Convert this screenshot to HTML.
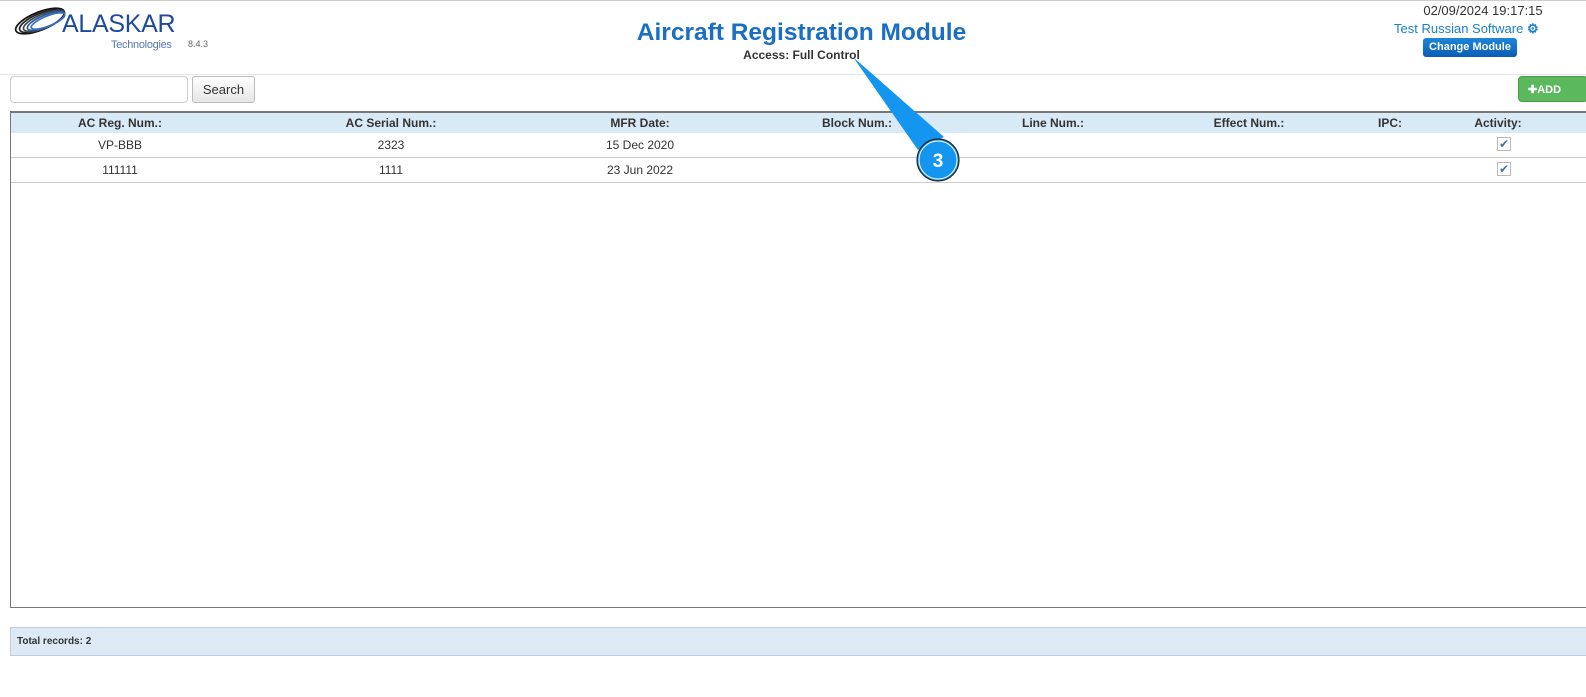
<!DOCTYPE html>
<html><head><style>
body{margin:0;width:1586px;height:697px;overflow:hidden;background:#fff;font-family:"Liberation Sans",Arial,sans-serif;position:relative}
.a{position:absolute}
.th,.td{position:absolute;transform:translateX(-50%);white-space:nowrap;font-size:12px;color:#333}
.th{font-weight:bold;top:116px}
</style></head><body>
<div class="a" style="left:0;top:0;width:1586px;height:1px;background:#ccc"></div>
<svg class="a" style="left:12px;top:4px" width="60" height="34" viewBox="0 0 60 34">
<g fill="none" stroke-width="1.7">
<ellipse cx="28" cy="17" rx="26" ry="9" transform="rotate(-22 28 17)" stroke="#111"/>
<ellipse cx="30" cy="17" rx="24" ry="8" transform="rotate(-22 30 17)" stroke="#222"/>
<ellipse cx="32" cy="17" rx="22" ry="7" transform="rotate(-22 32 17)" stroke="#444"/>
<ellipse cx="34" cy="17" rx="20" ry="6" transform="rotate(-22 34 17)" stroke="#2a5aa8"/>
<ellipse cx="36" cy="17" rx="18" ry="5" transform="rotate(-22 36 17)" stroke="#3a6cc0"/>
</g></svg>
<div class="a" style="left:62px;top:10px;font-size:25px;color:#1d4a9c;letter-spacing:-0.3px">ALASKAR</div>
<div class="a" style="left:111px;top:39px;font-size:11px;color:#5a78b0;letter-spacing:-0.3px">Technologies</div>
<div class="a" style="left:188px;top:39px;font-size:9px;color:#666">8.4.3</div>
<div class="a" style="left:0;width:1603px;top:19px;text-align:center;font-size:24.5px;font-weight:bold;color:#1a6fc4">Aircraft Registration Module</div>
<div class="a" style="left:0;width:1603px;top:48px;text-align:center;font-size:12px;font-weight:bold;color:#333">Access: Full Control</div>
<div class="a" style="left:1380px;width:206px;top:3px;text-align:center;font-size:13px;color:#333">02/09/2024 19:17:15</div>
<div class="a" style="left:1394px;top:21px;font-size:13px;color:#1a80c8">Test Russian Software <span style="font-size:13px;font-weight:bold">⚙</span></div>
<div class="a" style="left:1423px;top:38px;width:94px;height:19px;background:linear-gradient(#1e86d8,#0b5cb4);border-radius:3px;color:#fff;font-size:11px;font-weight:bold;text-align:center;line-height:19px">Change Module</div>
<div class="a" style="left:0;top:74px;width:1586px;height:1px;background:#e3e3e3"></div>
<div class="a" style="left:10px;top:76px;width:176px;height:25px;border:1px solid #ccc;border-radius:4px"></div>
<div class="a" style="left:192px;top:76px;width:61px;height:25px;border:1px solid #bbb;border-radius:3px;background:linear-gradient(#fff,#e6e6e6);font-size:13px;color:#333;text-align:center;line-height:25px">Search</div>
<div class="a" style="left:1518px;top:76px;width:70px;height:26px;background:#5cb85c;border:1px solid #4a9c4a;border-radius:4px;color:#fff;font-size:11px;font-weight:bold;line-height:26px;padding-left:9px;box-sizing:border-box">✚ADD</div>
<div class="a" style="left:10px;top:111px;width:1580px;height:497px;border:1px solid #777;border-top:2px solid #777;box-sizing:border-box"></div>
<div class="a" style="left:11px;top:113px;width:1576px;height:20px;background:#d9eaf7"></div>
<div class="a" style="left:11px;top:157px;width:1576px;height:1px;background:#ccc"></div>
<div class="a" style="left:11px;top:182px;width:1576px;height:1px;background:#ccc"></div>
<div class="th" style="left:120px">AC Reg. Num.:</div>
<div class="th" style="left:391px">AC Serial Num.:</div>
<div class="th" style="left:640px">MFR Date:</div>
<div class="th" style="left:857px">Block Num.:</div>
<div class="th" style="left:1053px">Line Num.:</div>
<div class="th" style="left:1249px">Effect Num.:</div>
<div class="th" style="left:1390px">IPC:</div>
<div class="th" style="left:1498px">Activity:</div>
<div class="td" style="left:120px;top:138px">VP-BBB</div>
<div class="td" style="left:391px;top:138px">2323</div>
<div class="td" style="left:640px;top:138px">15 Dec 2020</div>
<div class="td" style="left:120px;top:163px">111111</div>
<div class="td" style="left:391px;top:163px">1111</div>
<div class="td" style="left:640px;top:163px">23 Jun 2022</div>
<div class="a" style="left:1497px;top:137px;width:12px;height:12px;border:1px solid #bbb;font-size:12px;color:#4a6fa0;line-height:12px;text-align:center">✔</div>
<div class="a" style="left:1497px;top:162px;width:12px;height:12px;border:1px solid #bbb;font-size:12px;color:#4a6fa0;line-height:12px;text-align:center">✔</div>
<div class="a" style="left:10px;top:627px;width:1580px;height:29px;background:#dde9f5;border:1px solid #b8cfe6;box-sizing:border-box;font-size:10px;font-weight:bold;color:#333;line-height:27px;padding-left:6px">Total records: 2</div>
<svg class="a" style="left:0;top:0" width="1586" height="697">
<path d="M853 57 L944 137 L918 150 Z" fill="#1496f0"/>
<circle cx="938" cy="160" r="21" fill="#1496f0" stroke="#222" stroke-width="1.2"/>
<circle cx="938" cy="160" r="19" fill="none" stroke="#fff" stroke-width="1"/>
<text x="938" y="167" text-anchor="middle" font-family="Liberation Sans" font-weight="bold" font-size="19" fill="#fff">3</text>
</svg>
</body></html>
